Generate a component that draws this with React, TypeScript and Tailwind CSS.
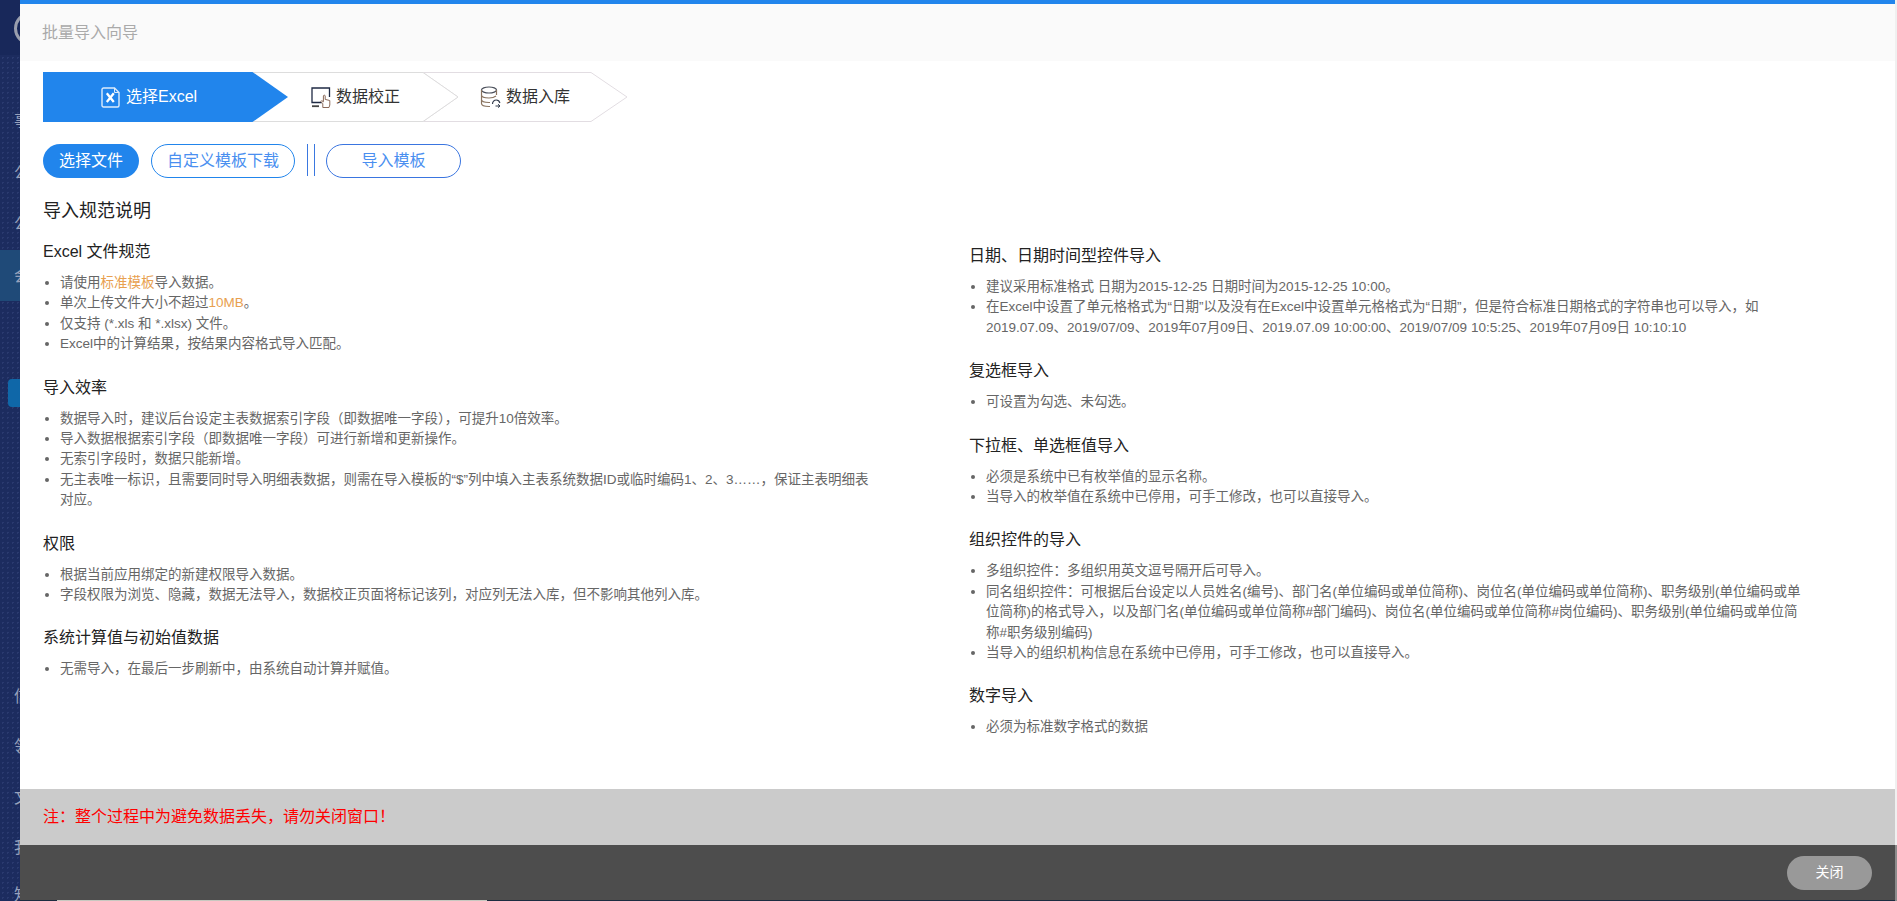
import React from 'react';

const FONT = 'font-["Liberation_Sans","Noto_Sans_CJK_SC",sans-serif]';

type Section = { title: string; items: React.ReactNode[] };

const leftSections: Section[] = [
  {
    title: 'Excel 文件规范',
    items: [
      <>请使用<span className="text-[#e8a04f]">标准模板</span>导入数据。</>,
      <>单次上传文件大小不超过<span className="text-[#e8a04f]">10MB</span>。</>,
      '仅支持 (*.xls 和 *.xlsx) 文件。',
      'Excel中的计算结果，按结果内容格式导入匹配。',
    ],
  },
  {
    title: '导入效率',
    items: [
      '数据导入时，建议后台设定主表数据索引字段（即数据唯一字段），可提升10倍效率。',
      '导入数据根据索引字段（即数据唯一字段）可进行新增和更新操作。',
      '无索引字段时，数据只能新增。',
      '无主表唯一标识，且需要同时导入明细表数据，则需在导入模板的“$”列中填入主表系统数据ID或临时编码1、2、3……，保证主表明细表对应。',
    ],
  },
  {
    title: '权限',
    items: [
      '根据当前应用绑定的新建权限导入数据。',
      '字段权限为浏览、隐藏，数据无法导入，数据校正页面将标记该列，对应列无法入库，但不影响其他列入库。',
    ],
  },
  {
    title: '系统计算值与初始值数据',
    items: ['无需导入，在最后一步刷新中，由系统自动计算并赋值。'],
  },
];

const rightSections: Section[] = [
  {
    title: '日期、日期时间型控件导入',
    items: [
      '建议采用标准格式 日期为2015-12-25 日期时间为2015-12-25 10:00。',
      '在Excel中设置了单元格格式为“日期”以及没有在Excel中设置单元格格式为“日期”，但是符合标准日期格式的字符串也可以导入，如2019.07.09、2019/07/09、2019年07月09日、2019.07.09 10:00:00、2019/07/09 10:5:25、2019年07月09日 10:10:10',
    ],
  },
  { title: '复选框导入', items: ['可设置为勾选、未勾选。'] },
  {
    title: '下拉框、单选框值导入',
    items: ['必须是系统中已有枚举值的显示名称。', '当导入的枚举值在系统中已停用，可手工修改，也可以直接导入。'],
  },
  {
    title: '组织控件的导入',
    items: [
      '多组织控件：多组织用英文逗号隔开后可导入。',
      '同名组织控件：可根据后台设定以人员姓名(编号)、部门名(单位编码或单位简称)、岗位名(单位编码或单位简称)、职务级别(单位编码或单位简称)的格式导入，以及部门名(单位编码或单位简称#部门编码)、岗位名(单位编码或单位简称#岗位编码)、职务级别(单位编码或单位简称#职务级别编码)',
      '当导入的组织机构信息在系统中已停用，可手工修改，也可以直接导入。',
    ],
  },
  { title: '数字导入', items: ['必须为标准数字格式的数据'] },
];

const Rule = ({ section, first }: { section: Section; first: boolean }) => (
  <div className={first ? '' : 'mt-[22px]'}>
    <h3 className="text-[16px] leading-[22px] text-[#222]">{section.title}</h3>
    <ul className="mt-[10px] list-disc pl-[17px] text-[13.5px] leading-[20.4px] text-[#666]">
      {section.items.map((item, i) => (
        <li key={i}>{item}</li>
      ))}
    </ul>
  </div>
);

const ExcelIcon = () => (
  <svg width="19" height="21" viewBox="0 0 19 21" fill="none" className="shrink-0">
    <path d="M2.5 1H13.5L18 5.5V18.5C18 19.3 17.3 20 16.5 20H2.5C1.7 20 1 19.3 1 18.5V2.5C1 1.7 1.7 1 2.5 1Z" stroke="#dcebfb" strokeWidth="1.4" />
    <path d="M13.5 1V5.5H18" stroke="#dcebfb" strokeWidth="1" />
    <path d="M5.8 6.2L12.8 15M12.8 6.2L5.8 15" stroke="#fff" strokeWidth="2.3" />
  </svg>
);

const MonitorIcon = () => (
  <svg width="20" height="21" viewBox="0 0 20 21" fill="none" className="shrink-0">
    <path d="M11 15.5H1V1H18.5V10" stroke="#1f2a44" strokeWidth="1.3" />
    <path d="M1 19.2H8" stroke="#444" strokeWidth="1.8" />
    <path d="M11.8 20.5V16.5L9.8 14.6L10.7 13.6L12.4 14.8V9C12.4 7.9 14.2 7.9 14.2 9V12.4L18.8 13.5V18L18 20.5Z" fill="#fff" stroke="#8a6a5a" strokeWidth="1" />
  </svg>
);

const DatabaseIcon = () => (
  <svg width="21" height="22" viewBox="0 0 21 22" fill="none" className="shrink-0">
    <ellipse cx="9" cy="4" rx="7.5" ry="3" stroke="#4a4f5a" strokeWidth="1.2" />
    <path d="M1.5 4V17.5C1.5 19.2 4.8 20.5 9 20.5H10M16.5 4V9M1.5 9C1.5 10.7 4.8 12 9 12C12 12 14.6 11.2 16 10M1.5 13.5C1.5 15.2 4.8 16.5 9 16.5H10" stroke="#8a7460" strokeWidth="1.2" />
    <path d="M12.5 18C12.5 15.8 14.2 14 16.2 14C18 14 19.5 15.3 19.9 17M20 20H15.5" stroke="#333c4c" strokeWidth="1.2" />
    <path d="M18 18.2L20 20L18 21.6" stroke="#333c4c" strokeWidth="1" />
  </svg>
);

// Sidebar of the page behind the dialog: only its first 20px are visible
const Backdrop = () => {
  const glyph = 'pl-[14px] text-[16px] text-[#98a2bc] whitespace-nowrap';
  return (
    <div className="h-[901px] w-[20px] shrink-0 overflow-hidden bg-[#1c2c5f] bg-[radial-gradient(#2a3a6f_1px,transparent_1px)] bg-[length:5px_5px]">
      <div className="h-[55px] bg-[#18285a] pl-[14px] pt-[12px]">
        <div className="h-[33px] w-[33px] rounded-full border-[3px] border-[#9a9fae]" />
      </div>
      <div className={`mt-[54px] leading-[24px] ${glyph}`}>事</div>
      <div className={`mt-[28px] leading-[24px] ${glyph}`}>公</div>
      <div className={`mt-[27px] leading-[24px] ${glyph}`}>公</div>
      <div className={`mt-[14px] h-[51px] bg-[#1f4a78] leading-[51px] ${glyph}`}>会</div>
      <div className="ml-[8px] mt-[78px] h-[28px] rounded-l-[4px] bg-[#0f67a8]" />
      <div className={`mt-[278px] leading-[24px] ${glyph}`}>信</div>
      <div className={`mt-[26px] leading-[24px] ${glyph}`}>领</div>
      <div className={`mt-[27px] leading-[24px] ${glyph}`}>文</div>
      <div className={`mt-[26px] leading-[24px] ${glyph}`}>我</div>
      <div className={`mt-[23px] leading-[24px] ${glyph}`}>知</div>
    </div>
  );
};

export default function App() {
  return (
    <div className={`flex h-[901px] w-[1897px] overflow-hidden ${FONT}`}>
      <Backdrop />

      <div className="flex w-[1875px] flex-col">
        <div className="flex h-[900px] flex-col border-t-4 border-[#2185ec] bg-white">
          {/* Title */}
          <div className="flex h-[57px] shrink-0 items-center bg-[#fafafa] pl-[22px] text-[16px] text-[#aaa]">批量导入向导</div>

          <div className="flex-1 px-[23px]">
            {/* Steps */}
            <div className="relative mt-[11px] h-[50px] w-[590px]">
              <svg width="590" height="50" viewBox="0 0 590 50" fill="none" className="absolute inset-0">
                <path d="M380 .5H548L584 25L548 49.5H380L415 25Z" fill="#fff" stroke="#e2dde2" />
                <path d="M209.5 .5H380L415 25L380 49.5H209.5Z" fill="#fff" stroke="#ddd" />
                <path d="M0 0H209.5L245 25L209.5 50H0Z" fill="#2185ec" />
              </svg>
              <div className="relative flex h-full text-[16px]">
                <div className="flex w-[209px] items-center gap-[6px] pl-[58px] text-white">
                  <ExcelIcon />
                  <span>选择Excel</span>
                </div>
                <div className="flex w-[171px] items-center gap-[5px] pl-[59px] text-[#333]">
                  <MonitorIcon />
                  <span>数据校正</span>
                </div>
                <div className="flex items-center gap-[5px] pl-[57px] text-[#333]">
                  <DatabaseIcon />
                  <span>数据入库</span>
                </div>
              </div>
            </div>

            {/* Actions */}
            <div className="mt-[22px] flex h-[34px] items-start text-[16px]">
              <button className="h-[34px] w-[96px] rounded-full bg-[#2185ec] text-white">选择文件</button>
              <button className="ml-[12px] h-[34px] w-[144px] rounded-full border border-[#2185ec] text-[#4a8ff0]">自定义模板下载</button>
              <div className="ml-[12px] h-[32px] w-[8px] border-x border-[#3a78e0]" />
              <button className="ml-[11px] h-[34px] w-[135px] rounded-full border border-[#3a75e0] text-[#4a8ff0]">导入模板</button>
            </div>

            <h2 className="mt-[21px] text-[18px] leading-[24px] text-[#222]">导入规范说明</h2>

            <div className="flex">
              <div className="mt-[18px] w-[835px] shrink-0">
                {leftSections.map((s, i) => (
                  <Rule key={s.title} section={s} first={i === 0} />
                ))}
              </div>
              <div className="ml-[91px] mt-[22px] w-[835px] shrink-0">
                {rightSections.map((s, i) => (
                  <Rule key={s.title} section={s} first={i === 0} />
                ))}
              </div>
            </div>
          </div>

          {/* Note */}
          <div className="flex h-[56px] shrink-0 items-center bg-[#cbcbcb] pl-[23px] text-[16px] text-[#ff0000]">
            注：整个过程中为避免数据丢失，请勿关闭窗口！
          </div>

          {/* Footer */}
          <div className="flex h-[55px] shrink-0 items-center justify-end bg-[#4d4d4d] pr-[23px]">
            <button className="h-[34px] w-[85px] rounded-full bg-[#999] text-[14px] text-white">关闭</button>
          </div>
        </div>

        {/* Sliver of the page underneath */}
        <div className="flex h-[1px] bg-[#1c2c40]">
          <div className="ml-[37px] w-[430px] bg-[#c8c8c0]" />
        </div>
      </div>

      <div className="flex w-[2px] flex-col">
        <div className="h-[845px] bg-[#f0f0f0]" />
        <div className="flex-1 bg-[#8c8c8c]" />
      </div>
    </div>
  );
}
